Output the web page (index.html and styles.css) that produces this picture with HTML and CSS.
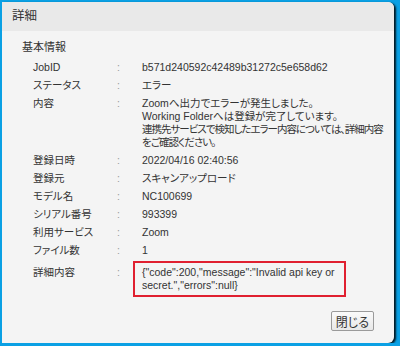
FILE: index.html
```html
<!DOCTYPE html>
<html lang="ja">
<head>
    <meta charset="UTF-8">
    <meta name="viewport" content="width=device-width, initial-scale=1.0">
    <title>詳細</title>
    <link rel="stylesheet" href="styles.css">
</head>
<body>

    <div class="dialog">
        <div class="dialog-header">詳細</div>

        <div class="dialog-body">
            <div class="section-title">基本情報</div>

            <!-- Job info rows -->
            <div class="info">
                <div class="row">
                    <span class="label">JobID</span>
                    <span class="colon">:</span>
                    <span class="value">b571d240592c42489b31272c5e658d62</span>
                </div>
                <div class="row">
                    <span class="label">ステータス</span>
                    <span class="colon">:</span>
                    <span class="value">エラー</span>
                </div>
                <div class="row">
                    <span class="label">内容</span>
                    <span class="colon">:</span>
                    <span class="value">Zoomへ出力でエラーが発生しました。<br>Working Folderへは登録が完了しています。<br><span class="tight">連携先サービスで検知したエラー内容については、詳細内容をご確認ください。</span></span>
                </div>
                <div class="row">
                    <span class="label">登録日時</span>
                    <span class="colon">:</span>
                    <span class="value">2022/04/16 02:40:56</span>
                </div>
                <div class="row">
                    <span class="label">登録元</span>
                    <span class="colon">:</span>
                    <span class="value">スキャンアップロード</span>
                </div>
                <div class="row">
                    <span class="label">モデル名</span>
                    <span class="colon">:</span>
                    <span class="value">NC100699</span>
                </div>
                <div class="row">
                    <span class="label">シリアル番号</span>
                    <span class="colon">:</span>
                    <span class="value">993399</span>
                </div>
                <div class="row">
                    <span class="label">利用サービス</span>
                    <span class="colon">:</span>
                    <span class="value">Zoom</span>
                </div>
                <div class="row">
                    <span class="label">ファイル数</span>
                    <span class="colon">:</span>
                    <span class="value">1</span>
                </div>
                <div class="row row-detail">
                    <span class="label">詳細内容</span>
                    <span class="colon">:</span>
                    <span class="value">
                        <span class="error-box">{"code":200,"message":"Invalid api key or secret.","errors":null}</span>
                    </span>
                </div>
            </div>

            <div class="dialog-footer">
                <button type="button" class="btn-close">閉じる</button>
            </div>
        </div>
    </div>

</body>
</html>
```

FILE: styles.css
```css
body {
    margin: 0;
    background-color: #0aa0e4;
    font-family: "Liberation Sans", "Noto Sans CJK JP", sans-serif;
    font-feature-settings: "palt";
    color: #333;
}

.dialog {
    width: 392px;
    height: 341px;
    margin: 2px 0 0 2px;
    background-color: #f4f4f4;
    border-radius: 0 6px 6px 0;
    box-shadow: 2px 1px 2px rgba(0, 0, 0, 0.85);
    display: flex;
    flex-direction: column;
    overflow: hidden;
}

.dialog-header {
    height: 29px;
    line-height: 29px;
    padding-left: 10px;
    font-size: 12.5px;
    background-color: #e9e9e9;
}

.dialog-body {
    flex: 1;
    padding: 9px 4px 0 20px;
    display: flex;
    flex-direction: column;
}

.section-title {
    font-size: 11px;
    line-height: 14px;
    margin-bottom: 4px;
}

.info {
    padding-left: 11px;
    font-size: 10.5px;
    line-height: 13px;
}

.row {
    display: flex;
    padding: 3px 0 2px;
}

.label {
    width: 84px;
    flex-shrink: 0;
}

.colon {
    width: 25px;
    flex-shrink: 0;
    color: #999;
}

.value {
    flex: 1;
}

.tight {
    letter-spacing: -1px;
}

.row-detail {
    margin-top: 2px;
    padding-top: 5px;
}

.row-detail .value {
    margin-left: -9px;
}

.error-box {
    display: block;
    width: 195px;
    margin-top: -5px;
    padding: 3px 7px;
    border: 2px solid #e02030;
}

.dialog-footer {
    display: flex;
    justify-content: flex-end;
    padding: 12px 16px 0 0;
}

.btn-close {
    height: 20px;
    padding: 0 4px;
    font-family: "Liberation Sans", "Noto Sans CJK JP", sans-serif;
    font-feature-settings: "palt";
    font-size: 12px;
    color: #333;
    background: linear-gradient(#fafafa, #e8e8e8);
    border: 1px solid #9a9a9a;
    border-radius: 2px;
}
```
